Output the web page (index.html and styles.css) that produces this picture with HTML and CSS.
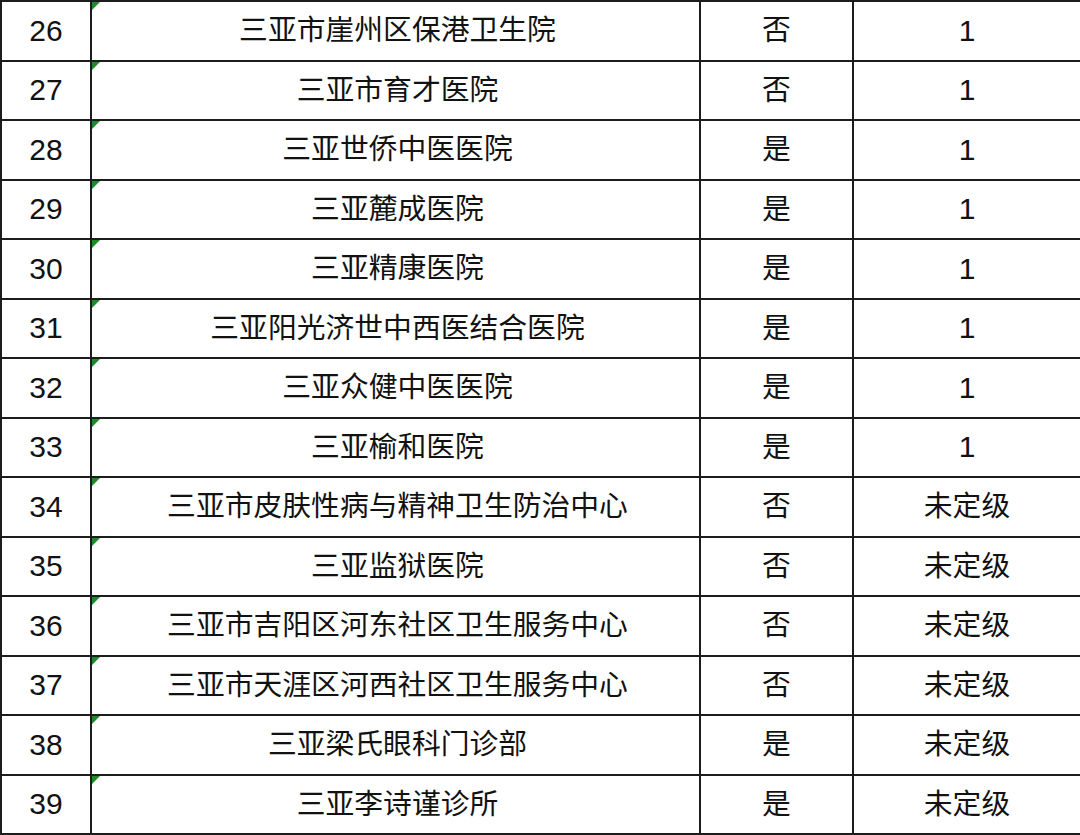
FILE: index.html
```html
<!DOCTYPE html>
<html lang="zh">
<head>
<meta charset="utf-8">
<link rel="stylesheet" href="styles.css">
</head>
<body>
<table class="list">
  <colgroup>
    <col class="c-no"><col class="c-name"><col class="c-yn"><col class="c-lv">
  </colgroup>
  <tbody>
    <tr><td class="no">26</td><td class="name">三亚市崖州区保港卫生院</td><td>否</td><td class="lv">1</td></tr>
    <tr><td class="no">27</td><td class="name">三亚市育才医院</td><td>否</td><td class="lv">1</td></tr>
    <tr><td class="no">28</td><td class="name">三亚世侨中医医院</td><td>是</td><td class="lv">1</td></tr>
    <tr><td class="no">29</td><td class="name">三亚麓成医院</td><td>是</td><td class="lv">1</td></tr>
    <tr><td class="no">30</td><td class="name">三亚精康医院</td><td>是</td><td class="lv">1</td></tr>
    <tr><td class="no">31</td><td class="name">三亚阳光济世中西医结合医院</td><td>是</td><td class="lv">1</td></tr>
    <tr><td class="no">32</td><td class="name">三亚众健中医医院</td><td>是</td><td class="lv">1</td></tr>
    <tr><td class="no">33</td><td class="name">三亚榆和医院</td><td>是</td><td class="lv">1</td></tr>
    <tr><td class="no">34</td><td class="name">三亚市皮肤性病与精神卫生防治中心</td><td>否</td><td>未定级</td></tr>
    <tr><td class="no">35</td><td class="name">三亚监狱医院</td><td>否</td><td>未定级</td></tr>
    <tr><td class="no">36</td><td class="name">三亚市吉阳区河东社区卫生服务中心</td><td>否</td><td>未定级</td></tr>
    <tr><td class="no">37</td><td class="name">三亚市天涯区河西社区卫生服务中心</td><td>否</td><td>未定级</td></tr>
    <tr><td class="no">38</td><td class="name">三亚梁氏眼科门诊部</td><td>是</td><td>未定级</td></tr>
    <tr><td class="no">39</td><td class="name">三亚李诗谨诊所</td><td>是</td><td>未定级</td></tr>
    <tr class="next"><td class="no"></td><td class="name"></td><td></td><td></td></tr>
  </tbody>
</table>
</body>
</html>
```
FILE: styles.css
```css
html, body {
  margin: 0;
  padding: 0;
  background: #ffffff;
  height: 835px;
  overflow: hidden;
}

.list {
  border-collapse: collapse;
  table-layout: fixed;
  width: 1080px;
  font-family: "Liberation Sans", "Noto Sans CJK SC", sans-serif;
  font-size: 28.8px;
  color: #121212;
}

.c-no { width: 90px; }
.c-name { width: 609px; }
.c-yn { width: 153px; }
.c-lv { width: 228px; }

.list td {
  border: 2px solid #1c1c1c;
  height: 57.5px;
  padding: 0;
  text-align: center;
  vertical-align: middle;
  line-height: 1;
}

.list td.no,
.list td.lv {
  font-size: 30px;
}

.list td.name {
  position: relative;
  padding-left: 4px;
}

.list td.name::before {
  content: "";
  position: absolute;
  top: 0;
  left: 0;
  border-top: 8px solid #1f8a2a;
  border-right: 8px solid transparent;
}
```
